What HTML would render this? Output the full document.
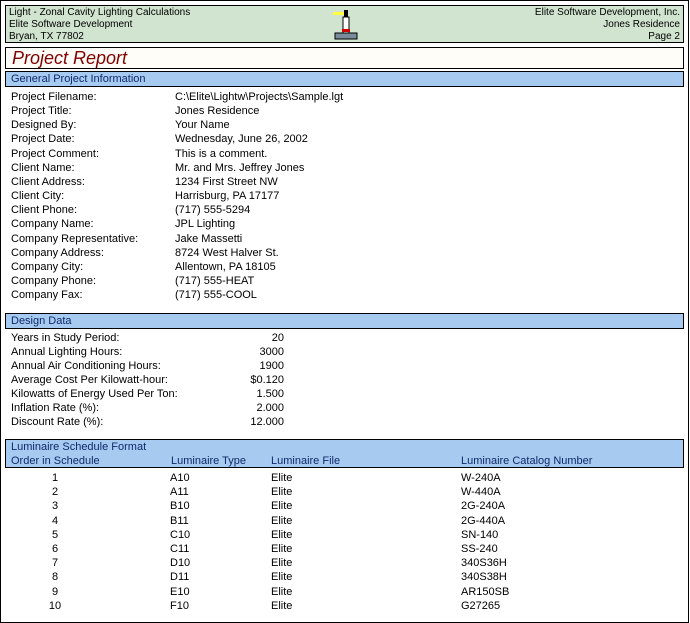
<!DOCTYPE html><html><head><style>
body{margin:0;width:690px;height:623px;background:#fff;position:relative;font-family:"Liberation Sans",Arial,sans-serif;font-size:11px;color:#000;overflow:hidden}
.pg{position:absolute;left:0;top:0;width:687px;height:621px;border:1px solid #000}
.a{position:absolute;white-space:nowrap;line-height:13px}
.band{position:absolute;left:5px;width:677px;background:#a6caf0;border:1px solid #000;color:#102a6a}
.r{text-align:right}
</style></head><body>
<div class="pg"></div>
<div style="position:absolute;left:5px;top:5px;width:677px;height:36px;background:#d0e4d0;border:1px solid #000;font-size:10px">
<div class="a" style="left:3px;top:0">Light - Zonal Cavity Lighting Calculations</div>
<div class="a" style="left:3px;top:12px">Elite Software Development</div>
<div class="a" style="left:3px;top:24px">Bryan, TX 77802</div>
<div class="a r" style="right:3px;top:0">Elite Software Development, Inc.</div>
<div class="a r" style="right:3px;top:12px">Jones Residence</div>
<div class="a r" style="right:3px;top:24px">Page 2</div>
<svg style="position:absolute;left:322px;top:2px" width="34" height="32"><rect x="5" y="4" width="12" height="3" fill="#ffff40"/><rect x="16" y="2" width="4" height="7" fill="#000"/><rect x="15" y="9" width="6" height="16" fill="#fff" stroke="#000"/><rect x="14" y="21" width="8" height="3" fill="#c00"/><rect x="7" y="25" width="22" height="6" fill="#7a8a9a" stroke="#000"/></svg>
</div>
<div style="position:absolute;left:5px;top:47px;width:677px;height:20px;background:#fffdf8;border:1px solid #000"><div class="a" style="left:6px;top:1px;font-size:18px;line-height:19px;font-style:italic;color:#800000">Project Report</div></div>
<div class="band" style="top:71px;height:14px"><div class="a" style="left:5px;top:1px">General Project Information</div></div>
<div class="band" style="top:313px;height:14px"><div class="a" style="left:5px;top:1px">Design Data</div></div>
<div class="band" style="top:439px;height:27px"><div class="a" style="left:5px;top:1px">Luminaire Schedule Format</div>
<div class="a" style="left:5px;top:15px">Order in Schedule</div><div class="a" style="left:165px;top:15px">Luminaire Type</div><div class="a" style="left:265px;top:15px">Luminaire File</div><div class="a" style="left:455px;top:15px">Luminaire Catalog Number</div></div>
<div id="c"></div>
<script>
var g=[["Project Filename:","C:\\Elite\\Lightw\\Projects\\Sample.lgt"],["Project Title:","Jones Residence"],["Designed By:","Your Name"],["Project Date:","Wednesday, June 26, 2002"],["Project Comment:","This is a comment."],["Client Name:","Mr. and Mrs. Jeffrey Jones"],["Client Address:","1234 First Street NW"],["Client City:","Harrisburg, PA  17177"],["Client Phone:","(717) 555-5294"],["Company Name:","JPL Lighting"],["Company Representative:","Jake Massetti"],["Company Address:","8724 West Halver St."],["Company City:","Allentown, PA  18105"],["Company Phone:","(717) 555-HEAT"],["Company Fax:","(717) 555-COOL"]];
var h="";g.forEach(function(r,i){var t=91+i*14.15;h+='<div class="a" style="left:11px;top:'+t+'px">'+r[0]+'</div><div class="a" style="left:175px;top:'+t+'px">'+r[1]+'</div>';});
var d=[["Years in Study Period:","20"],["Annual Lighting Hours:","3000"],["Annual Air Conditioning Hours:","1900"],["Average Cost Per Kilowatt-hour:","$0.120"],["Kilowatts of Energy Used Per Ton:","1.500"],["Inflation Rate (%):","2.000"],["Discount Rate (%):","12.000"]];
d.forEach(function(r,i){var t=332+i*14;h+='<div class="a" style="left:11px;top:'+t+'px">'+r[0]+'</div><div class="a r" style="left:200px;width:84px;top:'+t+'px">'+r[1]+'</div>';});
var l=[["A10","W-240A"],["A11","W-440A"],["B10","2G-240A"],["B11","2G-440A"],["C10","SN-140"],["C11","SS-240"],["D10","340S36H"],["D11","340S38H"],["E10","AR150SB"],["F10","G27265"]];
l.forEach(function(r,i){var t=472+i*14.2;h+='<div class="a" style="left:40px;width:30px;text-align:center;top:'+t+'px">'+(i+1)+'</div><div class="a" style="left:170px;top:'+t+'px">'+r[0]+'</div><div class="a" style="left:271px;top:'+t+'px">Elite</div><div class="a" style="left:461px;top:'+t+'px">'+r[1]+'</div>';});
document.getElementById("c").innerHTML=h;
</script>
</body></html>
